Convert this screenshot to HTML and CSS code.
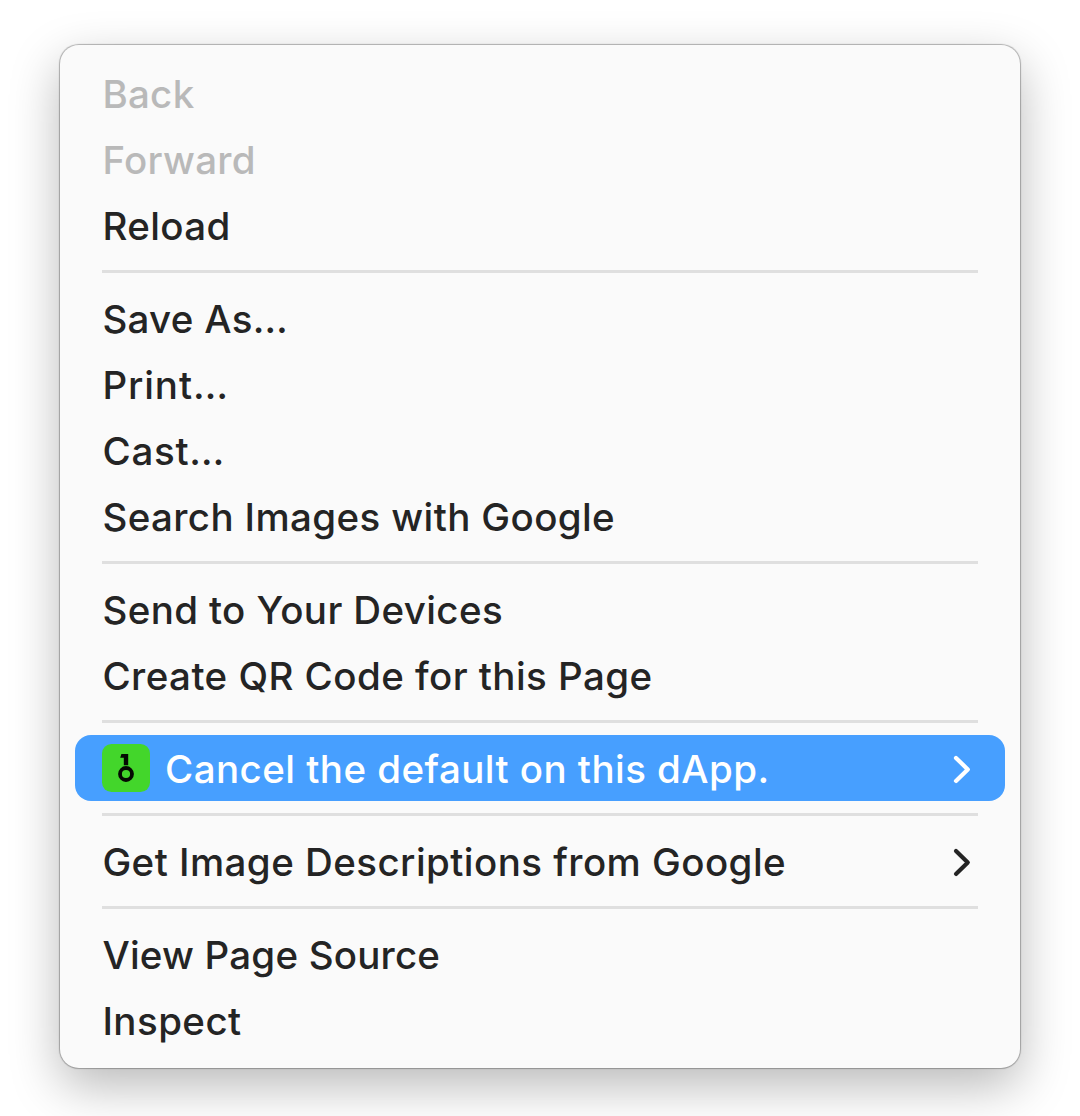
FILE: index.html
```html
<!DOCTYPE html>
<html lang="en">
<head>
<meta charset="utf-8">
<title>Context menu</title>
<link rel="stylesheet" href="styles.css">
</head>
<body>
<div class="menu" role="menu">
  <div class="item disabled"><span class="label tight">Back</span></div>
  <div class="item disabled"><span class="label tight">Forward</span></div>
  <div class="item"><span class="label">Reload</span></div>
  <div class="separator"></div>
  <div class="item"><span class="label tight">Save As…</span></div>
  <div class="item"><span class="label widest">Print…</span></div>
  <div class="item"><span class="label wider">Cast…</span></div>
  <div class="item"><span class="label">Search Images with Google</span></div>
  <div class="separator"></div>
  <div class="item"><span class="label">Send to Your Devices</span></div>
  <div class="item"><span class="label wide">Create QR Code for this Page</span></div>
  <div class="separator"></div>
  <div class="item selected">
    <svg class="app-icon" viewBox="0 0 48 48"><rect width="48" height="48" rx="9.5" fill="#43d62b"/><path d="M19.4 10H26.2v11.3h-4.4V13.7h-3.6z" fill="#050a03"/><circle cx="24" cy="30" r="6" fill="none" stroke="#050a03" stroke-width="3.8"/></svg>
    <span class="label wide">Cancel the default on this dApp.</span>
    <svg class="chevron" viewBox="0 0 18 28"><path d="M3 3.9l11.8 11.5L3 26.9"/></svg>
  </div>
  <div class="separator"></div>
  <div class="item"><span class="label wide">Get Image Descriptions from Google</span>
    <svg class="chevron" viewBox="0 0 18 28"><path d="M3 3.9l11.8 11.5L3 26.9"/></svg>
  </div>
  <div class="separator"></div>
  <div class="item"><span class="label tighter">View Page Source</span></div>
  <div class="item"><span class="label wide">Inspect</span></div>
</div>
</body>
</html>
```
FILE: styles.css
```css
* { box-sizing: border-box; }
body {
  margin: 0;
  padding: 45px 60px 0;
  height: 1116px;
  overflow: hidden;
  background: #fff;
  font-family: Inter, sans-serif;
}
.menu {
  height: 1023px;
  padding: 15px;
  border-radius: 19px;
  background: #fafafa;
  box-shadow: 0 0 1px 1px rgba(0, 0, 0, .28), 0 18px 50px rgba(0, 0, 0, .28);
}
.item {
  display: flex;
  align-items: center;
  height: 66px;
  padding: 0 34px 0 27px;
  color: #242424;
  font-size: 38.5px;
  font-weight: 500;
  line-height: 62px;
  white-space: nowrap;
}
.label { padding: 1px 0 0 .4px; letter-spacing: .38px; }
.tighter { letter-spacing: .2px; }
.tight { letter-spacing: .29px; }
.wide { letter-spacing: .45px; }
.wider { letter-spacing: .75px; }
.widest { letter-spacing: .9px; }
.disabled { color: #b9b9b9; }
.separator {
  height: 3px;
  margin: 12px 27px;
  background: #dfdfdf;
}
.selected {
  border-radius: 16px;
  background: #479fff;
  color: #fff;
}
.selected .label { padding-left: 0; }
.app-icon {
  width: 48px;
  height: 48px;
  margin-right: 15px;
}
.chevron {
  width: 18px;
  height: 28px;
  margin-left: auto;
  overflow: visible;
  fill: none;
  stroke: currentColor;
  stroke-width: 4.2;
  stroke-linecap: round;
  stroke-linejoin: round;
}
```
